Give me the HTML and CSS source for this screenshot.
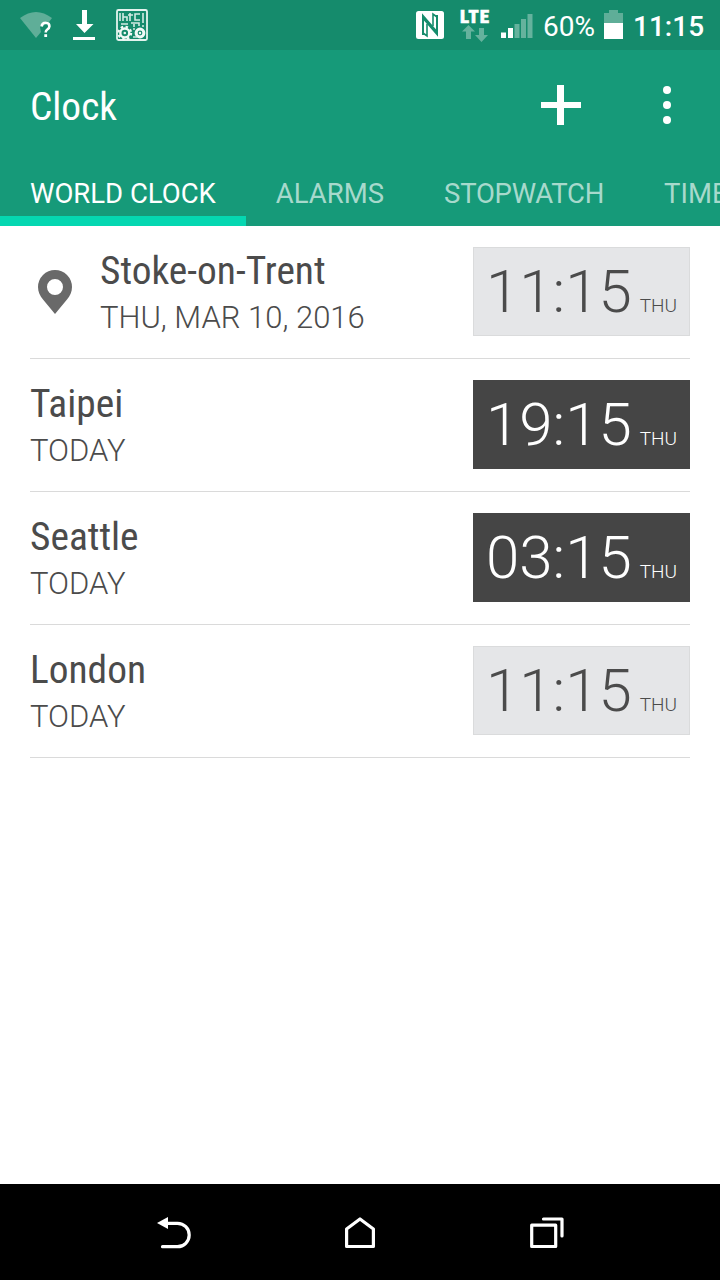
FILE: index.html
```
<!DOCTYPE html>
<html lang="en">
<head>
    <meta charset="UTF-8">
    <meta name="viewport" content="width=device-width, initial-scale=1.0">
    <title>Clock</title>
    <link rel="stylesheet" href="styles.css">
</head>
<body>
    <div class="phone">
        <div class="status-bar">
            <svg class="status-left" width="150" height="50" viewBox="0 0 150 50">
                <!-- wifi -->
                <path d="M20 18Q36 6 52 18L49 22Q43 20 40 27L41 32L36 38Z" fill="#5fae98"/>
                <path d="M41.6 26.500Q42 22.800 45.800 22.800Q49.400 23 49.400 26.300Q49.200 28.300 47.300 29.500Q45.700 30.600 45.700 32.600" fill="none" stroke="#fff" stroke-width="2.600"/>
                <rect x="44.300" y="34.200" width="2.800" height="2.800" fill="#fff"/>
                <!-- download -->
                <path d="M82 10h5v14h6.500L84.500 33L76 24h6zM73 37h22v3H73z" fill="#fff"/>
                <!-- circuit board -->
                <rect x="117" y="10" width="30" height="30" rx="1.500" fill="none" stroke="#e4f3ee" stroke-width="1.800"/>
                <path d="M120 13v8M123 13v8M123 17h4v4M130 13v8M128 15h5M140 14h-5v6h5M143 13v10M121 24h7M131 23h8v3M134 24v3M142 26h2" fill="none" stroke="#d3ebe4" stroke-width="1.600"/>
                <circle cx="124.800" cy="33" r="4.500" fill="none" stroke="#f1f9f6" stroke-width="2.400"/>
                <circle cx="124.800" cy="33" r="6.300" fill="none" stroke="#f1f9f6" stroke-width="2.200" stroke-dasharray="2.500 2.450"/>
                <circle cx="124.800" cy="33" r="1.300" fill="#f1f9f6"/>
                <circle cx="140" cy="33" r="3.900" fill="none" stroke="#f1f9f6" stroke-width="3"/>
                <circle cx="140" cy="33" r="1.200" fill="#f1f9f6"/>
                <path d="M133 37h4M133 29h2" stroke="#d3ebe4" stroke-width="1.500"/>
            </svg>
            <div class="status-right">
                <!-- nfc -->
                <svg width="28" height="28" viewBox="0 0 28 28">
                    <rect width="28" height="28" rx="2.500" fill="#fff"/>
                    <path d="M7 24V5L20 20" fill="none" stroke="#158b6c" stroke-width="2"/>
                    <path d="M21 4V23L8 8" fill="none" stroke="#158b6c" stroke-width="2"/>
                    <path d="M11 13V25L7 22M17 15V3L21 6" fill="none" stroke="#158b6c" stroke-width="1.600"/>
                </svg>
                <div class="network">
                    <span class="lte">LTE</span>
                    <svg width="26" height="17" viewBox="0 0 26 17">
                        <path d="M6.500 0L13 6.500H9V14H4V6.500H0zM17 3h5v7h4l-6.500 7L13 10h4z" fill="#65b29d"/>
                    </svg>
                </div>
                <svg class="signal" width="32" height="24" viewBox="0 0 32 24">
                    <path d="M0 18.500h5V24H0zM7 14h5v10H7z" fill="#fff"/>
                    <path d="M13.500 10h5v14h-5zM20 5h5v19h-5zM26.500 0h5v24h-5z" fill="#65b29d"/>
                </svg>
                <span class="percent">60%</span>
                <svg class="battery" width="19" height="29" viewBox="0 0 19 29">
                    <path d="M5 0h9v3h5v10H0V3h5z" fill="#5fae98"/>
                    <path d="M0 13h19v16H0z" fill="#fff"/>
                </svg>
                <span class="status-time">11:15</span>
            </div>
        </div>

        <header class="header">
            <div class="app-bar">
                <h1>Clock</h1>
                <svg class="add" width="40" height="40" viewBox="0 0 40 40">
                    <path d="M16 0h7v17h17v6H23v17h-7V23H0v-6h16z" fill="#fff"/>
                </svg>
                <svg class="more" width="8" height="38" viewBox="0 0 8 38">
                    <g fill="#fff">
                        <circle cx="4" cy="4" r="4"/>
                        <circle cx="4" cy="19" r="4"/>
                        <circle cx="4" cy="34" r="4"/>
                    </g>
                </svg>
            </div>
            <nav class="tabs">
                <span class="tab active">WORLD CLOCK</span>
                <span class="tab">ALARMS</span>
                <span class="tab stopwatch">STOPWATCH</span>
                <span class="tab">TIMER</span>
            </nav>
        </header>

        <main class="cities">
            <div class="city">
                <svg class="pin" width="34" height="44" viewBox="0 0 34 44">
                    <path d="M17 0A17 17 0 0 0 0 17C0 22 2 26 5 29.500L17 44L29 29.500C32 26 34 22 34 17A17 17 0 0 0 17 0zM17 9a8 8 0 1 1 0 16a8 8 0 1 1 0-16z" fill="#696969"/>
                </svg>
                <div class="info">
                    <div class="name">Stoke-on-Trent</div>
                    <div class="date">THU, MAR 10, 2016</div>
                </div>
                <div class="time day"><span class="digits">11:15</span><span class="weekday">THU</span></div>
            </div>
            <div class="city">
                <div class="info">
                    <div class="name">Taipei</div>
                    <div class="date">TODAY</div>
                </div>
                <div class="time night"><span class="digits">19:15</span><span class="weekday">THU</span></div>
            </div>
            <div class="city">
                <div class="info">
                    <div class="name">Seattle</div>
                    <div class="date">TODAY</div>
                </div>
                <div class="time night"><span class="digits">03:15</span><span class="weekday">THU</span></div>
            </div>
            <div class="city">
                <div class="info">
                    <div class="name">London</div>
                    <div class="date">TODAY</div>
                </div>
                <div class="time day"><span class="digits">11:15</span><span class="weekday">THU</span></div>
            </div>
        </main>

        <footer class="nav-bar">
            <!-- back -->
            <svg class="back" width="34" height="32" viewBox="0 0 34 32">
                <path d="M0 6L11 0V12z" fill="#fff"/>
                <path d="M9 6.300H20.500A11.700 11.700 0 0 1 20.500 29.700H5.500" fill="none" stroke="#fff" stroke-width="3.200" stroke-linecap="round"/>
            </svg>
            <!-- home -->
            <svg class="home" width="30" height="32" viewBox="0 0 30 32">
                <path d="M1.600 12L15 2L28.400 12V29.500H1.600z" fill="none" stroke="#fff" stroke-width="3.200" stroke-linejoin="round"/>
            </svg>
            <!-- recent apps -->
            <svg width="34" height="32" viewBox="0 0 34 32">
                <path d="M1.700 8.200H25.700V29.500H1.700zM13.500 2H32V19" fill="none" stroke="#fff" stroke-width="3.200" stroke-linejoin="round" stroke-linecap="round"/>
            </svg>
        </footer>
    </div>
</body>
</html>
```
FILE: styles.css
```
* {
    box-sizing: border-box;
}

body {
    margin: 0;
    font-family: Roboto, sans-serif;
    background-color: #fff;
}

svg {
    display: block;
    flex: none;
}

.phone {
    display: flex;
    flex-direction: column;
    width: 720px;
    height: 1280px;
    overflow: hidden;
}

.status-bar {
    display: flex;
    justify-content: space-between;
    height: 50px;
    background-color: #158b6c;
    color: #fff;
}

.status-right {
    display: flex;
    align-items: flex-start;
    padding: 11px 16px 0 0;
    line-height: 32px;
}

.network {
    display: flex;
    flex-direction: column;
    align-items: center;
    width: 30px;
    margin: -2px 11px 0 16px;
}

.lte {
    height: 16px;
    font-family: "Roboto Condensed", Roboto, sans-serif;
    font-stretch: 75%;
    font-size: 19px;
    font-weight: 900;
    letter-spacing: 1px;
    line-height: 15px;
    -webkit-text-stroke: 0.5px #fff;
}

.signal {
    margin-top: 3px;
}

.percent {
    width: 52px;
    margin: 0 9px 0 10px;
    font-size: 28px;
}

.battery {
    margin-top: -1px;
}

.status-time {
    width: 71px;
    margin-left: 10px;
    font-size: 28px;
    font-weight: 500;
}

.header {
    height: 176px;
    background-color: #169a79;
    color: #fff;
}

.app-bar {
    display: flex;
    align-items: center;
    height: 110px;
    padding: 0 49px 0 30px;
}

.app-bar h1 {
    flex: 1;
    margin: 2px 0 0;
    font-family: "Roboto Condensed", Roboto, sans-serif;
    font-stretch: 75%;
    font-size: 39.4px;
    font-weight: 400;
}

.more {
    margin-left: 82px;
}

.tabs {
    display: flex;
    height: 66px;
    overflow: hidden;
}

.tab {
    flex: none;
    padding: 0 30px;
    font-size: 27.5px;
    line-height: 68px;
    color: #a7d9cc;
}

.tab.active {
    color: #fff;
    border-bottom: 10px solid #05d7b1;
}

.tab.stopwatch {
    letter-spacing: -0.25px;
}

.cities {
    flex: 1;
    padding: 0 30px;
    color: #4b4b4b;
}

.city {
    display: flex;
    align-items: flex-start;
    height: 133px;
    padding-top: 21px;
    border-bottom: 1px solid #dadada;
}

.pin {
    margin: 23px 28px 0 8px;
}

.info {
    flex: 1;
}

.name {
    font-family: "Roboto Condensed", Roboto, sans-serif;
    font-stretch: 75%;
    font-size: 39.4px;
    line-height: 48px;
}

.date {
    font-size: 31px;
    font-weight: 300;
    line-height: 46px;
}

.time {
    display: flex;
    align-items: baseline;
    justify-content: space-between;
    width: 217px;
    height: 89px;
    padding: 0 12px;
    border: 1px solid #dadbdc;
    font-weight: 300;
    line-height: 87px;
}

.digits {
    font-size: 60px;
}

.weekday {
    font-size: 19px;
}

.day {
    background-color: #e5e6e8;
}

.night {
    background-color: #454545;
    border-color: #454545;
    color: #fff;
}

.nav-bar {
    display: flex;
    height: 96px;
    padding: 33px 0 0 157px;
    background-color: #000;
}

.back {
    margin-right: 154px;
}

.home {
    margin-right: 155px;
}
```
